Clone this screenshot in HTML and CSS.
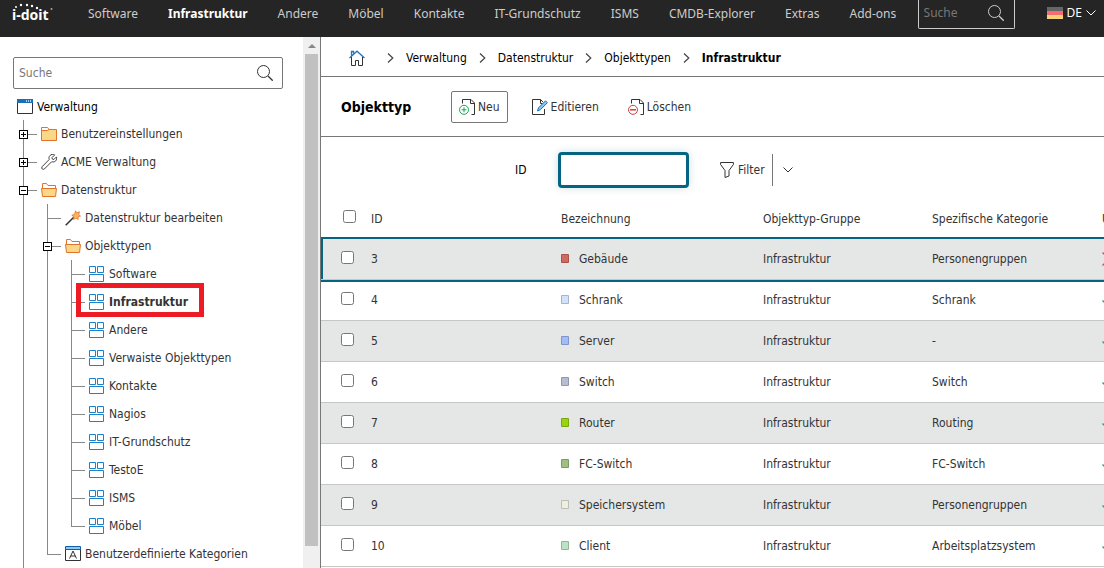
FILE: index.html
```html
<!DOCTYPE html>
<html lang="de">
<head>
	<meta charset="UTF-8">
	<title>i-doit - Infrastruktur</title>
	<link rel="stylesheet" href="styles.css">
</head>
<body>
	<!-- icons -->
	<svg class="sprite" aria-hidden="true">
		<symbol id="search" viewBox="0 0 16 16"><circle cx="6.5" cy="6.5" r="6" fill="none" stroke="currentColor"/><path d="M11 11l4.7 4.7" stroke="currentColor" stroke-width="1.3"/></symbol>
		<symbol id="down" viewBox="0 0 10 6"><path d="M.5.5L5 5 9.500.5" fill="none" stroke="currentColor"/></symbol>
		<symbol id="right" viewBox="0 0 7 10"><path d="M1 .5L5.800 5 1 9.500" fill="none" stroke="currentColor" stroke-width="1.2"/></symbol>
		<symbol id="window" viewBox="0 0 16 16"><path d="M.5.5h15v14H.5z" fill="#fff" stroke="#333"/><path d="M0 0h16v4H0z" fill="#1a6fb5"/><path d="M9 1h1v2H9zM11 1h1v2h-1zM13 1h1v2h-1z" fill="#9cd0f5"/></symbol>
		<symbol id="folder" viewBox="0 0 16 16"><path d="M.5 14.500V1.500h6l1.500 2h7.500v11z" fill="#fbd788" stroke="#e0742c"/><path d="M1 4.500h5.500l1.500-1" fill="none" stroke="#e0742c"/><path d="M1 2h5.300l1 1.500-1 .6H1z" fill="#fff"/></symbol>
		<symbol id="folder-open" viewBox="0 0 16 16"><path d="M1.500 6.500v-5h4l1.500 2h7.500v3" fill="#fff" stroke="#e0742c"/><path d="M.5 6.500h15l-1 8h-13z" fill="#fbd788" stroke="#e0742c"/></symbol>
		<symbol id="wrench" viewBox="0 0 16 16"><path d="M13.700.9L11 3.600l.4 1.500 1.500.4 2.600-2.600c.4 1.700.1 3-.8 4-1.100 1.100-2.600 1.300-4 .8L3.400 15c-1.500 1.200-3.500-.5-2.400-2.200L8.200 5.500c-.5-1.600-.2-3 .8-4C10.200.3 12 0 13.700.9z" fill="#fff" stroke="#444"/></symbol>
		<symbol id="wand" viewBox="0 0 16 16"><path d="M.7 15.300L9 7" stroke="#333" stroke-width="1.500"/><path d="M10.500.8l1.200 2 2.800-1-.8 2.700 1.800 1.600-2.500.7.2 2.600-2.400-1.200L8.500 9.500l.3-2.800-2-1.500 2.700-.6z" fill="#fbb65a" stroke="#e0742c" stroke-width=".8"/></symbol>
		<symbol id="blocks" viewBox="0 0 16 16"><path d="M.5.5h6v6h-6zM8.500.5h6v6h-6zM.5 8.500h14v7H.5z" fill="#fff" stroke="#1d82c9"/></symbol>
		<symbol id="category" viewBox="0 0 16 16"><path d="M.5 1.500h15v13H.5z" fill="#fff" stroke="#333"/><path d="M.5.5h15v3H.5z" fill="#8cc7f2" stroke="#0f5ea8"/><path d="M4.500 12.500L8 5l3.500 7.500M5.700 10h4.600" fill="none" stroke="#333"/></symbol>
		<symbol id="home" viewBox="0 0 16 16"><path d="M2.500 7v8.500h4v-5h3v5h4V7" fill="none" stroke="#333"/><path d="M.5 8L8 1.200 15.500 8M2.500 5.500V1.500h2v2" fill="none" stroke="#2873b8" stroke-width="1.300"/></symbol>
		<symbol id="new" viewBox="0 0 16 16"><path d="M3.500 4.500v-4H12L15.500 4v11.500h-3M11.500.5v4h4" fill="none" stroke="#333"/><circle cx="5" cy="10.800" r="4.500" fill="#fff" stroke="#1ca354"/><path d="M2.500 10.800h5M5 8.300v5" stroke="#1ca354"/></symbol>
		<symbol id="edit" viewBox="0 0 16 16"><path d="M12.500 10v5.500H.5V.5h8l2.500 2.500M8.500.5v4h2" fill="none" stroke="#333"/><path d="M5.500 12l1-3.200 7-7 1.900 1.900-7 7z" fill="#8cc7f2" stroke="#1a6fb5"/></symbol>
		<symbol id="delete" viewBox="0 0 16 16"><path d="M3.500 4.500v-4H12L15.500 4v11.500h-3M11.500.5v4h4" fill="none" stroke="#333"/><circle cx="5" cy="10.800" r="4.500" fill="#fff" stroke="#d93a3a"/><path d="M2 10.800h6" stroke="#d93a3a" stroke-width="1.500"/></symbol>
		<symbol id="filter" viewBox="0 0 14 16"><path d="M.6.5h12.800v2L9 8.500V14l-4 1.500v-7L.6 2.500z" fill="none" stroke="#333"/></symbol>
		<symbol id="flag" viewBox="0 0 16 12"><path d="M0 0h16v4H0z" fill="#666"/><path d="M0 4h16v4H0z" fill="#f36e6e"/><path d="M0 8h16v4H0z" fill="#fbd277"/></symbol>
		<symbol id="cross" viewBox="0 0 14 14"><path d="M.5.5l13 13M13.500.5l-13 13" stroke="#dc4a4a" stroke-width="1.300"/></symbol>
		<symbol id="check" viewBox="0 0 14 14"><path d="M.5 7.500l4.500 4.500 8.500-10" fill="none" stroke="#2fa562" stroke-width="1.500"/></symbol>
	</svg>

	<header class="topbar">
		<a class="logo" href="#" aria-label="i-doit">
			<svg width="44" height="24" viewBox="0 0 44 24">
				<text x="0" y="20">i-doit</text>
				<g>
					<circle cx="4" cy="7" r="1"/><circle cx="9" cy="5" r="1.200"/><circle cx="15" cy="5" r="1.200"/><circle cx="20" cy="6" r="1.200"/><circle cx="25" cy="8" r="1.200"/><circle cx="39.500" cy="9" r="1" opacity=".6"/>
				</g>
			</svg>
		</a>
		<nav class="mainnav">
			<a href="#">Software</a>
			<a href="#" class="active">Infrastruktur</a>
			<a href="#">Andere</a>
			<a href="#">Möbel</a>
			<a href="#">Kontakte</a>
			<a href="#">IT-Grundschutz</a>
			<a href="#">ISMS</a>
			<a href="#">CMDB-Explorer</a>
			<a href="#">Extras</a>
			<a href="#">Add-ons</a>
		</nav>
		<div class="topsearch">
			<input type="text" placeholder="Suche" aria-label="Globale Suche">
			<svg width="16" height="16"><use href="#search"/></svg>
		</div>
		<button type="button" class="lang">
			<svg width="16" height="12"><use href="#flag"/></svg>
			<span>DE</span>
			<svg width="10" height="6"><use href="#down"/></svg>
		</button>
	</header>

	<div class="page">
		<aside class="sidebar">
			<div class="treepane">
				<div class="treesearch">
					<input type="text" placeholder="Suche" aria-label="Baum durchsuchen">
					<svg width="16" height="16"><use href="#search"/></svg>
				</div>
				<a class="root" href="#"><svg width="16" height="16"><use href="#window"/></svg>Verwaltung</a>
				<ul class="tree">
					<li><div class="node"><button type="button" class="toggle closed" aria-label="Aufklappen"></button><a href="#"><svg width="16" height="16"><use href="#folder"/></svg>Benutzereinstellungen</a></div></li>
					<li><div class="node"><button type="button" class="toggle closed" aria-label="Aufklappen"></button><a href="#"><svg width="16" height="16"><use href="#wrench"/></svg>ACME Verwaltung</a></div></li>
					<li>
						<div class="node"><button type="button" class="toggle" aria-label="Zuklappen"></button><a href="#"><svg width="16" height="16"><use href="#folder-open"/></svg>Datenstruktur</a></div>
						<ul>
							<li><div class="node"><a href="#"><svg width="16" height="16"><use href="#wand"/></svg>Datenstruktur bearbeiten</a></div></li>
							<li>
								<div class="node"><button type="button" class="toggle" aria-label="Zuklappen"></button><a href="#"><svg width="16" height="16"><use href="#folder-open"/></svg>Objekttypen</a></div>
								<ul>
									<li><div class="node"><a href="#"><svg width="16" height="16"><use href="#blocks"/></svg>Software</a></div></li>
									<li class="marked"><div class="node"><a href="#"><svg width="16" height="16"><use href="#blocks"/></svg>Infrastruktur</a></div></li>
									<li><div class="node"><a href="#"><svg width="16" height="16"><use href="#blocks"/></svg>Andere</a></div></li>
									<li><div class="node"><a href="#"><svg width="16" height="16"><use href="#blocks"/></svg>Verwaiste Objekttypen</a></div></li>
									<li><div class="node"><a href="#"><svg width="16" height="16"><use href="#blocks"/></svg>Kontakte</a></div></li>
									<li><div class="node"><a href="#"><svg width="16" height="16"><use href="#blocks"/></svg>Nagios</a></div></li>
									<li><div class="node"><a href="#"><svg width="16" height="16"><use href="#blocks"/></svg>IT-Grundschutz</a></div></li>
									<li><div class="node"><a href="#"><svg width="16" height="16"><use href="#blocks"/></svg>TestoE</a></div></li>
									<li><div class="node"><a href="#"><svg width="16" height="16"><use href="#blocks"/></svg>ISMS</a></div></li>
									<li><div class="node"><a href="#"><svg width="16" height="16"><use href="#blocks"/></svg>Möbel</a></div></li>
								</ul>
							</li>
							<li><div class="node"><a href="#"><svg width="16" height="16"><use href="#category"/></svg>Benutzerdefinierte Kategorien</a></div></li>
						</ul>
					</li>
				</ul>
			</div>
			<div class="scrollbar" aria-hidden="true">
				<span class="arrow"></span>
				<span class="thumb"></span>
			</div>
		</aside>

		<main class="content">
			<nav class="breadcrumb">
				<a class="home" href="#" aria-label="Start"><svg width="16" height="16"><use href="#home"/></svg></a>
				<svg width="7" height="10"><use href="#right"/></svg>
				<a href="#">Verwaltung</a>
				<svg width="7" height="10"><use href="#right"/></svg>
				<a href="#">Datenstruktur</a>
				<svg width="7" height="10"><use href="#right"/></svg>
				<a href="#">Objekttypen</a>
				<svg width="7" height="10"><use href="#right"/></svg>
				<a href="#" class="current">Infrastruktur</a>
			</nav>

			<div class="toolbar">
				<h1>Objekttyp</h1>
				<button type="button" class="framed"><svg width="16" height="16"><use href="#new"/></svg>Neu</button>
				<button type="button"><svg width="16" height="16"><use href="#edit"/></svg>Editieren</button>
				<button type="button"><svg width="16" height="16"><use href="#delete"/></svg>Löschen</button>
			</div>

			<form class="filter">
				<label for="fid">ID</label>
				<input type="text" id="fid">
				<button type="button"><svg width="14" height="16"><use href="#filter"/></svg>Filter</button>
				<button type="button" class="more" aria-label="Mehr"><svg width="10" height="6"><use href="#down"/></svg></button>
			</form>

			<table class="list">
				<colgroup>
					<col class="c-check"><col class="c-id"><col class="c-name"><col class="c-group"><col class="c-cat"><col class="c-over">
				</colgroup>
				<thead>
					<tr>
						<th><input type="checkbox" aria-label="Alle"></th>
						<th>ID</th><th>Bezeichnung</th><th>Objekttyp-Gruppe</th><th>Spezifische Kategorie</th><th>Ü</th>
					</tr>
				</thead>
				<tbody>
					<tr class="selected">
						<td><input type="checkbox" aria-label="3"></td><td>3</td>
						<td><i class="swatch building"></i>Gebäude</td><td>Infrastruktur</td><td>Personengruppen</td>
						<td><svg width="14" height="14"><use href="#cross"/></svg></td>
					</tr>
					<tr>
						<td><input type="checkbox" aria-label="4"></td><td>4</td>
						<td><i class="swatch rack"></i>Schrank</td><td>Infrastruktur</td><td>Schrank</td>
						<td><svg width="14" height="14"><use href="#check"/></svg></td>
					</tr>
					<tr>
						<td><input type="checkbox" aria-label="5"></td><td>5</td>
						<td><i class="swatch server"></i>Server</td><td>Infrastruktur</td><td>-</td>
						<td><svg width="14" height="14"><use href="#check"/></svg></td>
					</tr>
					<tr>
						<td><input type="checkbox" aria-label="6"></td><td>6</td>
						<td><i class="swatch switch"></i>Switch</td><td>Infrastruktur</td><td>Switch</td>
						<td><svg width="14" height="14"><use href="#check"/></svg></td>
					</tr>
					<tr>
						<td><input type="checkbox" aria-label="7"></td><td>7</td>
						<td><i class="swatch router"></i>Router</td><td>Infrastruktur</td><td>Routing</td>
						<td><svg width="14" height="14"><use href="#check"/></svg></td>
					</tr>
					<tr>
						<td><input type="checkbox" aria-label="8"></td><td>8</td>
						<td><i class="swatch fc"></i>FC-Switch</td><td>Infrastruktur</td><td>FC-Switch</td>
						<td><svg width="14" height="14"><use href="#check"/></svg></td>
					</tr>
					<tr>
						<td><input type="checkbox" aria-label="9"></td><td>9</td>
						<td><i class="swatch storage"></i>Speichersystem</td><td>Infrastruktur</td><td>Personengruppen</td>
						<td><svg width="14" height="14"><use href="#check"/></svg></td>
					</tr>
					<tr>
						<td><input type="checkbox" aria-label="10"></td><td>10</td>
						<td><i class="swatch client"></i>Client</td><td>Infrastruktur</td><td>Arbeitsplatzsystem</td>
						<td><svg width="14" height="14"><use href="#check"/></svg></td>
					</tr>
				</tbody>
			</table>
		</main>
	</div>
</body>
</html>
```

FILE: styles.css
```css
*{box-sizing: border-box;}
body{margin: 0; height: 100vh; display: flex; flex-direction: column; overflow: hidden;
	background: #fff; color: #333; font: 12px/16px "DejaVu Sans Condensed", "Noto Sans", sans-serif;}
a{color: inherit; text-decoration: none;}
button{font: inherit; color: inherit; background: none; border: 0; padding: 0; display: flex; align-items: center;}
input{font: inherit; color: inherit;}
svg{flex: none;}
ul{list-style: none; margin: 0; padding: 0;}
.sprite{position: absolute; width: 0; height: 0;}

/* top bar */
.topbar{flex: none; height: 37px; display: flex; align-items: flex-start; padding: 0 8px 0 12px; background: #252525; color: #ccc;
	font-family: "Noto Sans", sans-serif;}
.logo{margin-right: 32px;}
.logo svg{display: block;}
.logo text{font-weight: bold; font-size: 14px; fill: #fff;}
.logo g{fill: #fff;}
.mainnav{display: flex; gap: 30px; padding-top: 6px; white-space: nowrap;}
.mainnav .active{color: #fff; font-weight: bold;}
.topsearch{display: flex; align-items: center; width: 97px; height: 29px; margin-left: auto; padding: 0 10px 2px 5px;
	border: 1px solid #ccc; border-top: 0; border-radius: 0 0 2px 2px;}
.topsearch input, .treesearch input{flex: 1; min-width: 0; border: 0; padding: 0; background: none; outline: 0;}
.topsearch input::placeholder{color: #777;}
.lang{gap: 4px; margin: 5px 0 0 32px; color: #fff;}

.page{flex: 1; min-height: 0; display: flex;}

/* tree */
.sidebar{flex: none; width: 321px; display: flex; border-right: 1px solid #777;}
.treepane{flex: 1; padding: 20px 20px 0 13px; overflow: hidden;}
.treesearch{display: flex; align-items: center; height: 32px; padding: 0 9px 0 5px; border: 1px solid #777; border-radius: 2px;}
.treesearch input::placeholder{color: #777;}
.root{display: flex; align-items: center; gap: 4px; height: 28px; margin: 4px 0 0 4px; color: #000;}
.tree{margin: -1px 0 0 10px;}
.tree ul{margin-left: 24px;}
.tree li{position: relative;}
.tree li::before{content: ""; position: absolute; left: 0; top: 0; bottom: 0; width: 1px; background: #888;}
.tree ul > li:last-child::before{bottom: auto; height: 14px;}
.node{position: relative; display: flex; align-items: center; height: 28px;}
.node::before{content: ""; order: 1; width: 14px; height: 1px; background: #888;}
.node a{order: 2; display: flex; align-items: center; gap: 4px; margin-left: 4px; white-space: nowrap;}
.toggle{width: 9px; height: 9px; margin: 0 -5px 0 -4px; justify-content: center; z-index: 1; border: 1px solid #000;
	background: linear-gradient(#000, #000) center / 5px 1px no-repeat #fff;}
.toggle.closed{background: linear-gradient(#000, #000) center / 5px 1px no-repeat, linear-gradient(#000, #000) center / 1px 5px no-repeat #fff;}
.marked a{font-weight: bold;}
.marked::after{content: ""; position: absolute; left: 5px; top: -5px; width: 118px; height: 24px; border: 5px solid #ed1c24;}

.scrollbar{flex: none; width: 17px; display: flex; flex-direction: column; align-items: center; background: #f0f0f0; padding: 7px 0 22px;}
.scrollbar .arrow{border: 4px solid transparent; border-top: 0; border-bottom: 4px solid #888; margin-bottom: 6px;}
.scrollbar .thumb{flex: 1; width: 13px; background: #c1c1c1;}

/* content */
.content{flex: 1; min-width: 0; overflow: hidden;}
.breadcrumb{display: flex; align-items: center; height: 40px; padding: 2px 0 0 28px; gap: 12px; border-bottom: 1px solid #777; color: #000;}
.breadcrumb .home{display: flex; margin-right: 10px;}
.breadcrumb svg{color: #444;}
.breadcrumb .current{font-weight: bold;}
.toolbar{display: flex; align-items: center; height: 60px; padding-left: 20px; border-bottom: 1px solid #777;}
.toolbar h1{width: 110px; margin: 0; font-size: 14px; color: #000;}
.toolbar button{gap: 3px; height: 32px; margin-right: 29px;}
.toolbar .framed{padding: 0 7px; margin-right: 24px; border: 1px solid #777; border-radius: 2px;}
.filter{display: flex; align-items: center; height: 63px; padding: 2px 0 0 194px;}
.filter label{width: 43px; color: #000;}
.filter input{width: 131px; height: 36px; margin-right: 31px; padding: 0 8px; border: 3px solid #056482; border-radius: 4px; outline: 0; box-shadow: 0 0 8px rgba(5, 100, 130, .2);}
.filter button{gap: 4px; height: 32px;}
.filter .more{margin-left: 7px; padding: 0 10px; border-left: 1px solid #777;}

.list{width: 100%; min-width: 886px; table-layout: fixed; border-collapse: separate; border-spacing: 0;}
.c-check{width: 45px;}
.c-id{width: 190px;}
.c-name{width: 202px;}
.c-group{width: 169px;}
.c-cat{width: 170px;}
.list th{height: 39px; padding: 0 5px 1px; font-weight: normal; text-align: left;}
.list td{height: 41px; padding: 0 5px; border-bottom: 1px solid #c5c7c6; white-space: nowrap;}
.list th:first-child{padding-left: 22px;}
.list td:first-child{padding-left: 20px;}
.list input{display: block; width: 13px; height: 13px; margin: 0 0 4px;}
.list th input{margin-bottom: 6px;}
.list td svg{display: block;}
.list tbody tr:nth-child(odd){background: #e5e7e6;}
.list .selected{box-shadow: 0 -2px #056482, 0 2px #056482, inset 2px 0 #056482;}
.swatch{display: inline-block; width: 8px; height: 9px; margin-right: 10px; border: 1px solid rgba(0, 0, 0, .2); border-radius: 1px;}
.building{background: #d2695e;}
.rack{background: #d3e2fb;}
.server{background: #a2bcfa;}
.switch{background: #b6bdd3;}
.router{background: #98d411;}
.fc{background: #9dc183;}
.storage{background: #eeefdf;}
.client{background: #bbe3c3;}
```
